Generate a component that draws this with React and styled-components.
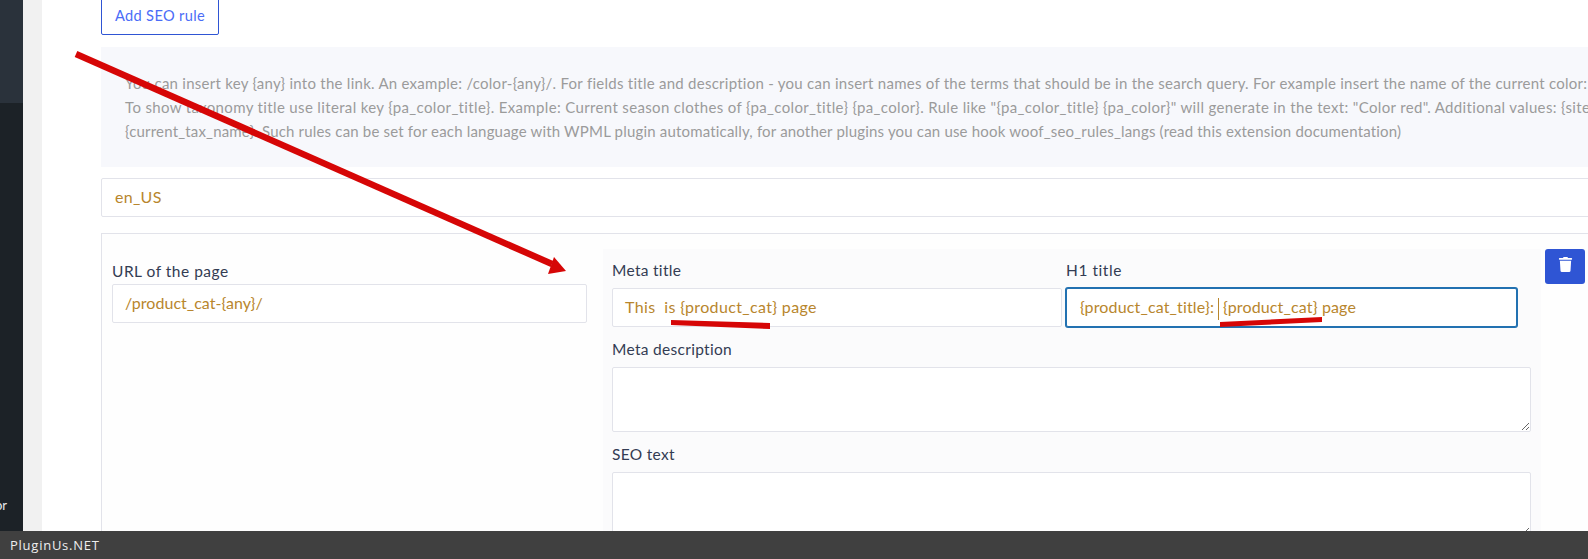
import React from 'react';
import styled, { createGlobalStyle } from 'styled-components';
import { FaTrash } from 'react-icons/fa';

const GlobalStyle = createGlobalStyle`
  html, body {
    margin: 0;
    padding: 0;
    background: #fff;
    overflow: hidden;
  }
  * {
    box-sizing: border-box;
  }
`;

const Screen = styled.div`
  position: relative;
  display: flex;
  flex-direction: column;
  width: 1588px;
  height: 559px;
  overflow: hidden;
  font-family: 'Lato', 'Noto Sans', sans-serif;
`;

const Workspace = styled.div`
  display: flex;
  flex: 1;
  min-height: 0;
`;

const Sidebar = styled.aside`
  display: flex;
  flex-direction: column;
  flex: 0 0 23px;
  overflow: hidden;
  background: #1c2227;
`;

const SidebarActive = styled.div`
  flex: 0 0 103px;
  background: #2a323b;
`;

const SidebarItem = styled.div`
  display: flex;
  justify-content: flex-end;
  margin-top: auto;
  margin-bottom: 17px;
  padding-right: 16px;
  font-size: 13px;
  line-height: 18px;
  color: #e8eaec;
`;

const Gutter = styled.div`
  flex: 0 0 19px;
  background: #f1f1f1;
`;

const Main = styled.main`
  flex: 1;
  min-width: 0;
  padding-left: 59px;
  overflow: hidden;
`;

const AddButton = styled.button`
  display: block;
  width: 118px;
  height: 40px;
  margin-top: -5px;
  padding: 0;
  border: 1px solid #2f55d4;
  border-radius: 2px;
  background: #fff;
  color: #4a6cf7;
  font-family: inherit;
  font-size: 14.6px;
  letter-spacing: 0.35px;
`;

const Notice = styled.div`
  height: 120px;
  margin: 12px -20px 0 0;
  padding: 24px 0 0 24px;
  background: #f7f8fc;
  color: #9b9b9b;
  font-size: 15px;
  line-height: 24px;
  white-space: nowrap;
  overflow: hidden;
`;

const NoticeLine = styled.div`
  letter-spacing: ${(p) => p.$tracking}px;
`;

const LocaleBox = styled.div`
  height: 39px;
  margin: 11px -20px 0 0;
  padding-left: 13px;
  border: 1px solid #e2e3ea;
  border-radius: 2px;
  background: #fff;
  color: #b8862d;
  font-size: 16px;
  line-height: 35px;
  letter-spacing: 0.3px;
`;

const RuleCard = styled.section`
  display: flex;
  align-items: flex-start;
  margin: 16px -20px 0 0;
  padding: 15px 0 0 10px;
  border: 1px solid #e2e3ea;
  background: #fefefe;
`;

const UrlColumn = styled.div`
  flex: 0 0 475px;
  padding-top: 12px;
`;

const Label = styled.div`
  height: 22px;
  margin-bottom: ${(p) => p.$gap || 6}px;
  color: #333c53;
  font-size: 15.5px;
  line-height: 20px;
  letter-spacing: ${(p) => p.$tracking || 0.3}px;
`;

const Field = styled.div`
  height: 39px;
  padding-left: ${(p) => (p.$focused ? 13 : 12)}px;
  border: 1px solid ${(p) => (p.$focused ? '#2271b1' : '#e2e3ea')};
  border-radius: 2px;
  background: #fff;
  box-shadow: ${(p) => (p.$focused ? '0 0 0 1px #2271b1' : 'none')};
  color: #b8862d;
  font-size: 16px;
  line-height: 35px;
  letter-spacing: ${(p) => p.$tracking}px;
  white-space: pre;
`;

const Caret = styled.span`
  display: inline-block;
  width: 1px;
  height: 22px;
  margin: 0 4px 0 4px;
  vertical-align: middle;
  background: #b8862d;
`;

const Panel = styled.div`
  flex: 0 0 938px;
  margin-left: 16px;
  padding: 11px 10px 0 9px;
  background: #fbfbfc;
`;

const TitleRow = styled.div`
  display: grid;
  grid-template-columns: 450px 451px;
  gap: 4px;
`;

const Block = styled.div`
  margin-top: 12px;
`;

const Area = styled.textarea`
  display: block;
  width: 100%;
  height: 65px;
  padding: 6px 12px;
  border: 1px solid #e2e3ea;
  border-radius: 2px;
  background: #fff;
  resize: vertical;
  outline: none;
`;

const TrashButton = styled.button`
  display: flex;
  align-items: center;
  justify-content: center;
  flex: 0 0 40px;
  height: 35px;
  margin-left: 4px;
  padding: 0 0 4px;
  border: 0;
  border-radius: 3px;
  background: #2f55d4;
  color: #fff;
  font-size: 15px;
`;

const FooterBar = styled.footer`
  flex: 0 0 28px;
  padding-left: 10px;
  background: #404040;
  color: #eeeeee;
  font-family: 'Open Sans', sans-serif;
  font-size: 13px;
  line-height: 28px;
  letter-spacing: 0.75px;
`;

// the red annotation marks drawn on top of the screenshot
const Annotations = styled.svg`
  position: absolute;
  top: 0;
  left: 0;
  pointer-events: none;
`;

const RED = '#d60606';

export default function App() {
  return (
    <Screen>
      <GlobalStyle />
      <Workspace>
        <Sidebar>
          <SidebarActive />
          <SidebarItem>or</SidebarItem>
        </Sidebar>
        <Gutter />
        <Main>
          <AddButton>Add SEO rule</AddButton>
          <Notice>
            <NoticeLine $tracking={0.26}>You can insert key {'{any}'} into the link. An example: /color-{'{any}'}/. For fields title and description - you can insert names of the terms that should be in the search query. For example insert the name of the current color:</NoticeLine>
            <NoticeLine $tracking={0.35}>To show taxonomy title use literal key {'{pa_color_title}'}. Example: Current season clothes of {'{pa_color_title}'} {'{pa_color}'}. Rule like "{'{pa_color_title}'} {'{pa_color}'}" will generate in the text: "Color red". Additional values: {'{site_title}'}</NoticeLine>
            <NoticeLine $tracking={0.18}>{'{current_tax_name}'}. Such rules can be set for each language with WPML plugin automatically, for another plugins you can use hook woof_seo_rules_langs (read this extension documentation)</NoticeLine>
          </Notice>
          <LocaleBox>en_US</LocaleBox>
          <RuleCard>
            <UrlColumn>
              <Label $gap={1} $tracking={0.5}>URL of the page</Label>
              <Field $tracking={0.03}>/product_cat-{'{any}'}/</Field>
            </UrlColumn>
            <Panel>
              <TitleRow>
                <div>
                  <Label>Meta title</Label>
                  <Field $tracking={0.35}>This  is {'{product_cat}'} page</Field>
                </div>
                <div>
                  <Label $tracking={0.55}>H1 title</Label>
                  <Field $focused $tracking={0.15}>{'{product_cat_title}'}:<Caret />{'{product_cat}'} page</Field>
                </div>
              </TitleRow>
              <Block>
                <Label>Meta description</Label>
                <Area readOnly />
              </Block>
              <Block>
                <Label>SEO text</Label>
                <Area readOnly />
              </Block>
            </Panel>
            <TrashButton aria-label="Delete rule"><FaTrash /></TrashButton>
          </RuleCard>
        </Main>
      </Workspace>
      <FooterBar>PluginUs.NET</FooterBar>
      <Annotations width="1588" height="559" viewBox="0 0 1588 559">
        <line x1="76" y1="54" x2="552" y2="264" stroke={RED} strokeWidth="6.5" />
        <polygon points="566,271 548,274 554,257" fill={RED} />
        <polygon points="671,320 770,323 770,329 671,325" fill={RED} />
        <polygon points="1220,322 1322,317 1322,322 1220,327" fill={RED} />
      </Annotations>
    </Screen>
  );
}
